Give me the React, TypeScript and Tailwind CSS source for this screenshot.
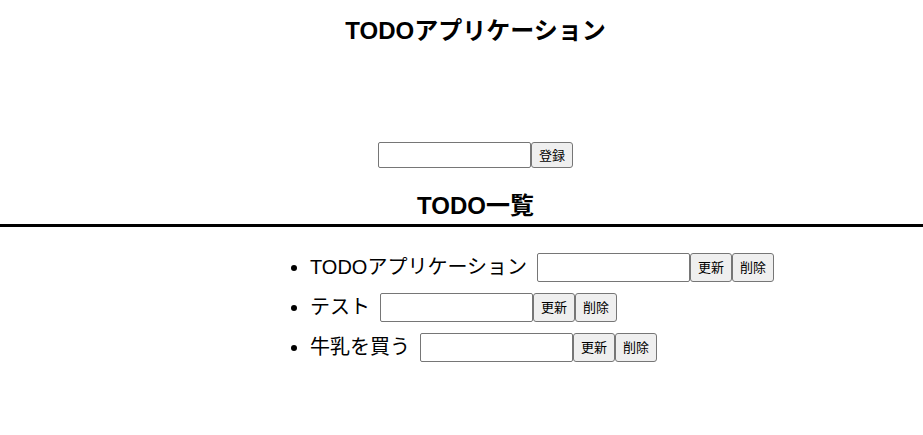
import React from 'react';

const font = { fontFamily: '"Liberation Sans", "Noto Sans CJK JP", sans-serif' };

const todos = ['TODOアプリケーション', 'テスト', '牛乳を買う'];

function TextBox({ className }: { className: string }) {
  return (
    <input
      type="text"
      className={`w-[153px] border border-[#767676] rounded-[2px] bg-white outline-none ${className}`}
    />
  );
}

function Btn({ label, className }: { label: string; className: string }) {
  return (
    <button
      className={`border border-[#767676] rounded-[3px] bg-[#efefef] text-[13px] text-black px-[7px] leading-none ${className}`}
    >
      {label}
    </button>
  );
}

export default function App() {
  return (
    <div className="w-[923px] h-[435px] bg-white text-black flex flex-col" style={font}>
      <h1 className="pt-[15px] pl-[28px] text-center text-[24px] font-bold leading-8">TODOアプリケーション</h1>

      <div className="mt-[95px] pl-[28px] flex justify-center">
        <TextBox className="h-[26px]" />
        <Btn label="登録" className="h-[26px]" />
      </div>

      <h2 className="mt-[22px] pl-[28px] text-center text-[24px] font-bold leading-8">TODO一覧</h2>
      <div className="mt-[2px] h-[3px] w-full bg-black" />

      <ul className="mt-[20px] pl-[291px] flex flex-col">
        {todos.map((t) => (
          <li key={t} className="h-[40px] flex items-center">
            <span className="w-[6px] h-[6px] rounded-full bg-black mr-[13px] mt-[1px]" />
            <span className="text-[20px] leading-none mr-[10px]">{t}</span>
            <TextBox className="h-[29px]" />
            <Btn label="更新" className="h-[29px]" />
            <Btn label="削除" className="h-[29px]" />
          </li>
        ))}
      </ul>
    </div>
  );
}
